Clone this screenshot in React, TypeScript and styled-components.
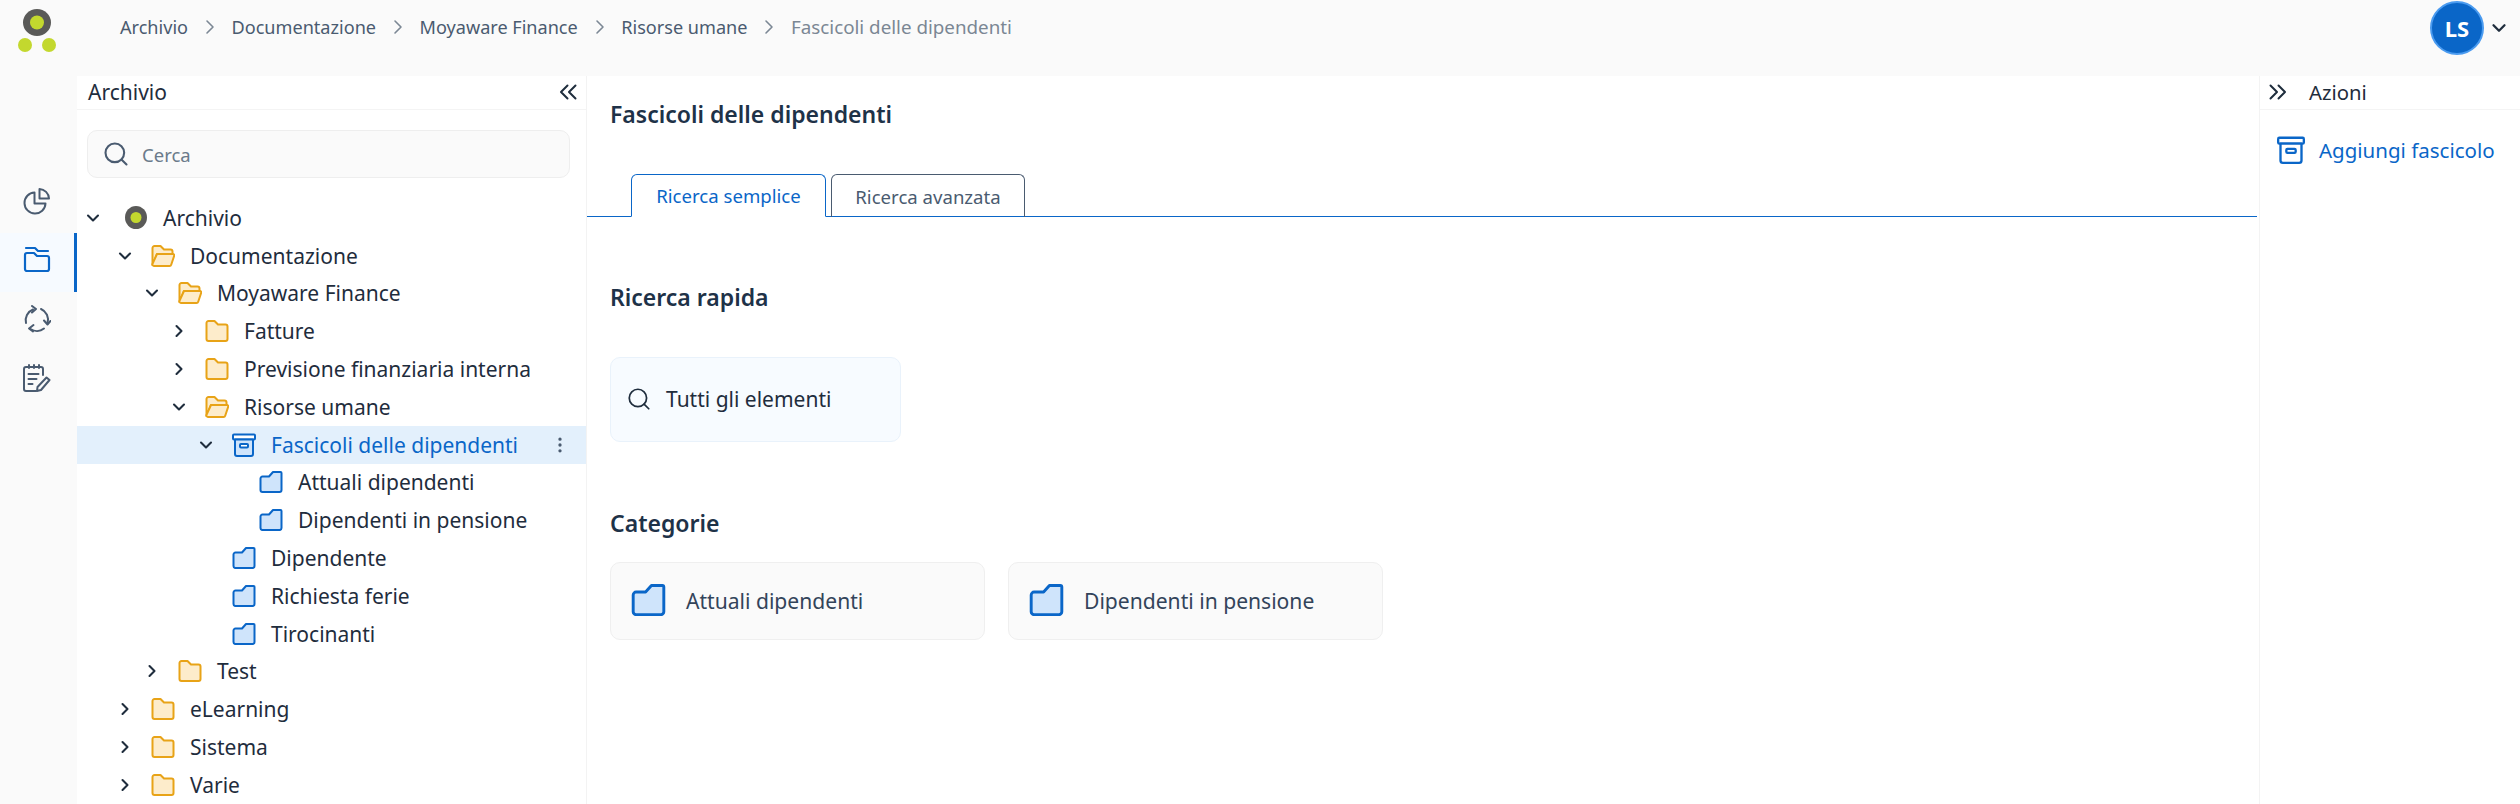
import React from 'react'
import styled, { createGlobalStyle } from 'styled-components'
import { ChevronDown, ChevronRight, MoreVertical, Search } from 'lucide-react'

const GlobalStyle = createGlobalStyle`
  html, body {
    margin: 0;
    padding: 0;
    background: #fafafa;
    font-family: "Noto Sans", "Liberation Sans", sans-serif;
    color: #1f2d3d;
  }
  * { box-sizing: border-box; }
`

const BLUE = '#0a66c8'

const Page = styled.div`
  width: 2520px;
  height: 804px;
  display: flex;
  flex-direction: column;
  overflow: hidden;
`

const TopBar = styled.header`
  height: 76px;
  display: flex;
  align-items: flex-start;
  background: #fafafa;
`

const LogoBox = styled.div`
  width: 120px;
  padding: 9px 0 0 18px;
  line-height: 0;
`

const Crumbs = styled.nav`
  display: flex;
  align-items: center;
  height: 54px;
  flex: 1;
`

const Crumb = styled.span<{ $current?: boolean }>`
  font-size: ${(p) => (p.$current ? 18.8 : 18.1)}px;
  color: ${(p) => (p.$current ? '#7b8794' : '#4a5b70')};
`

const CrumbSep = styled.span`
  display: flex;
  width: 43.5px;
  justify-content: center;
  color: #7b8794;
`

const UserBox = styled.div`
  display: flex;
  align-items: center;
  height: 56px;
  padding-right: 10px;
  gap: 4px;
`

const Avatar = styled.div`
  width: 54px;
  height: 54px;
  border-radius: 50%;
  background: ${BLUE};
  border: 2px solid #4a9bf0;
  color: #fff;
  font-size: 22px;
  font-weight: 700;
  display: flex;
  align-items: center;
  justify-content: center;
`

const Body = styled.div`
  flex: 1;
  display: flex;
  min-height: 0;
`

const Rail = styled.aside`
  width: 77px;
  padding-top: 98px;
  display: flex;
  flex-direction: column;
  flex-shrink: 0;
`

const RailItem = styled.div<{ $active?: boolean }>`
  height: 59px;
  display: flex;
  align-items: center;
  justify-content: center;
  padding-bottom: 5px;
  color: ${(p) => (p.$active ? BLUE : '#4a5b70')};
  background: ${(p) => (p.$active ? '#f6faff' : 'transparent')};
  border-right: 3px solid ${(p) => (p.$active ? BLUE : 'transparent')};
`

const TreePanel = styled.section`
  width: 510px;
  flex-shrink: 0;
  background: #fff;
  border-right: 1px solid #f3f3f3;
  overflow: hidden;
`

const PanelHead = styled.div`
  height: 34px;
  display: flex;
  align-items: center;
  justify-content: space-between;
  padding: 0 5px 2px 11px;
  border-bottom: 1px solid #f4f4f4;
  font-size: 21px;
`

const SearchBox = styled.div`
  margin: 20px 16px 21px 10px;
  height: 48px;
  display: flex;
  align-items: center;
  gap: 12px;
  padding-left: 14px;
  background: #fafafa;
  border: 1px solid #eeeeee;
  border-radius: 10px;
  font-size: 18.5px;
  color: #6b7a8a;
  svg { color: #4a5b70; }
`

const Row = styled.div<{ $level: number; $active?: boolean }>`
  height: 37.8px;
  display: flex;
  align-items: center;
  position: relative;
  padding-left: ${(p) => 6 + p.$level * 27}px;
  background: ${(p) => (p.$active ? '#e3f0fc' : 'transparent')};
  color: ${(p) => (p.$active ? BLUE : '#1f2d3d')};
  font-size: 21px;
`

const Twist = styled.span<{ $root: boolean }>`
  width: 20px;
  margin-left: ${(p) => (p.$root ? 0 : 5)}px;
  margin-right: ${(p) => (p.$root ? 21 : 16)}px;
  display: flex;
  justify-content: center;
  color: #1f2d3d;
`

const NodeIcon = styled.span`
  width: 24px;
  margin-right: 15px;
  display: flex;
  justify-content: center;
`

const RowMenu = styled.span`
  position: absolute;
  right: 16px;
  top: 9px;
  display: flex;
  color: #4a5b70;
`

const Main = styled.main`
  flex: 1;
  min-width: 0;
  background: #fff;
`

const Title = styled.h1`
  margin: 0;
  height: 98px;
  padding: 23px 0 0 23px;
  font-size: 23px;
  line-height: 30px;
  font-weight: 600;
  color: #1e3248;
`

const Tabs = styled.div`
  display: flex;
  gap: 5px;
  height: 43px;
  margin-right: 2px;
  padding-left: 44px;
  border-bottom: 1px solid ${BLUE};
`

const Tab = styled.div<{ $active?: boolean }>`
  height: 43px;
  width: ${(p) => (p.$active ? 195 : 194)}px;
  display: flex;
  align-items: center;
  justify-content: center;
  border: 1px solid ${(p) => (p.$active ? BLUE : '#4a5b70')};
  border-bottom: ${(p) => (p.$active ? '1px solid #fff' : 'none')};
  border-radius: 6px 6px 0 0;
  font-size: 18.6px;
  color: ${(p) => (p.$active ? BLUE : '#4a5b70')};
`

const Section = styled.section<{ $top: number }>`
  padding: ${(p) => p.$top}px 0 0 23px;
`

const SectionTitle = styled.h2`
  margin: 0 0 45px;
  font-size: 23px;
  line-height: 30px;
  font-weight: 600;
  color: #1e3248;
`

const CategoryTitle = styled(SectionTitle)`
  margin-bottom: 24px;
`

const QuickCard = styled.div`
  width: 291px;
  height: 85px;
  display: flex;
  align-items: center;
  gap: 14px;
  padding: 0 0 2px 15px;
  background: #f7fbff;
  border: 1px solid #e9f2fb;
  border-radius: 10px;
  font-size: 21px;
  svg { color: #1f2d3d; }
`

const CardRow = styled.div`
  display: flex;
  gap: 23px;
`

const CategoryCard = styled.div`
  width: 375px;
  height: 78px;
  display: flex;
  align-items: center;
  gap: 20px;
  padding: 0 0 2px 20px;
  background: #fafafa;
  border: 1px solid #efefef;
  border-radius: 10px;
  font-size: 21.1px;
  color: #33445a;
`

const ActionPanel = styled.aside`
  width: 261px;
  flex-shrink: 0;
  background: #fff;
  border-left: 1px solid #f3f3f3;
`

const ActionHead = styled(PanelHead)`
  justify-content: flex-start;
  gap: 20px;
  padding-left: 5px;
  font-size: 20.3px;
`

const ActionLink = styled.div`
  display: flex;
  align-items: center;
  gap: 14px;
  padding: 26px 0 0 17px;
  font-size: 20.5px;
  color: ${BLUE};
`

const Logo = () => (
  <svg width="38" height="43" viewBox="0 0 38 43">
    <ellipse cx="19" cy="13.5" rx="14" ry="13.5" fill="#5a5a58" />
    <circle cx="19" cy="13.5" r="7" fill="#c3d82e" />
    <circle cx="7" cy="36" r="7" fill="#c3d82e" />
    <circle cx="31" cy="36" r="7" fill="#c3d82e" />
  </svg>
)

const MiniLogo = () => (
  <svg width="22" height="23" viewBox="0 0 22 23">
    <ellipse cx="11" cy="11.5" rx="11" ry="11.5" fill="#5a5a58" />
    <circle cx="11" cy="11.5" r="5.5" fill="#c3d82e" />
  </svg>
)

const FolderClosed = () => (
  <svg width="24" height="22" viewBox="0 0 24 22" fill="#fdeccb" stroke="#e8a317" strokeWidth="2" strokeLinejoin="round">
    <path d="M1.5 3a2 2 0 0 1 2-2h6l3.5 3.5h7.5a2 2 0 0 1 2 2V19a2 2 0 0 1-2 2h-17a2 2 0 0 1-2-2z" />
  </svg>
)

const FolderOpen = () => (
  <svg width="24" height="22" viewBox="0 0 24 22" fill="#fdeccb" stroke="#e8a317" strokeWidth="2" strokeLinejoin="round">
    <path d="M1.5 3a2 2 0 0 1 2-2h6l3.5 3.5h6.5a2 2 0 0 1 2 2V9H6L1.5 20z" />
    <path d="M6 9h16a1.3 1.3 0 0 1 1.2 1.7l-3 9a1.8 1.8 0 0 1-1.7 1.3H3a1.6 1.6 0 0 1-1.5-2.2z" />
  </svg>
)

const FolderBlue = ({ size = 24 }: { size?: number }) => (
  <svg width={size} height={size * 0.92} viewBox="0 0 24 22" fill="#cfe4fb" stroke={BLUE} strokeWidth="2" strokeLinejoin="round">
    <path d="M1.5 7.5a2 2 0 0 1 2-2H10L14 1h7.5a1 1 0 0 1 1 1V19a2 2 0 0 1-2 2h-17a2 2 0 0 1-2-2z" />
  </svg>
)

const ArchiveBox = ({ fill = '#cfe4fb', w = 24 }: { fill?: string; w?: number }) => (
  <svg width={w} height={w} viewBox="0 0 24 24" fill="none" stroke={BLUE} strokeWidth="2" strokeLinejoin="round">
    <rect x="1" y="1.5" width="22" height="5" rx="1" fill="#fff" />
    <path d="M3 6.5h18V21a2 2 0 0 1-2 2H5a2 2 0 0 1-2-2z" fill={fill} />
    <rect x="8" y="11" width="8" height="3.5" rx="1" fill="#fff" />
  </svg>
)

const DoubleChevron = ({ flip }: { flip?: boolean }) => (
  <svg width="24" height="24" viewBox="0 0 24 24" fill="none" stroke="#1f2d3d" strokeWidth="2" strokeLinecap="round" strokeLinejoin="round">
    <path d={flip ? 'M5.5 5.5L12 12l-6.5 6.5M13.5 5.5L20 12l-6.5 6.5' : 'M10.5 5.5L4 12l6.5 6.5M18.5 5.5L12 12l6.5 6.5'} />
  </svg>
)

const PieIcon = () => (
  <svg width="28" height="28" viewBox="0 0 28 28" fill="none" stroke="currentColor" strokeWidth="2" strokeLinejoin="round" strokeLinecap="round">
    <path d="M11.5 5.5a10.5 10.5 0 1 0 11 11H11.5z" />
    <path d="M16.5 2a10 10 0 0 1 9.5 9.5h-9.5z" />
  </svg>
)

const FoldersIcon = () => (
  <svg width="28" height="28" viewBox="0 0 28 28" fill="none" stroke="currentColor" strokeWidth="2.2" strokeLinejoin="round" strokeLinecap="round">
    <path d="M3 2h9l3 3h10" />
    <path d="M2 9a2 2 0 0 1 2-2h7l3 3h10a2 2 0 0 1 2 2v11a2 2 0 0 1-2 2H4a2 2 0 0 1-2-2z" />
  </svg>
)

const CycleIcon = () => (
  <svg width="28" height="28" viewBox="0 0 28 28" fill="none" stroke="currentColor" strokeWidth="2" strokeLinejoin="round" strokeLinecap="round">
    <path d="M3 18a11.5 11.5 0 0 1 7-13.5" />
    <path d="M9 1l4 3-4 3.5" />
    <path d="M18 4a11.5 11.5 0 0 1 6.5 14" />
    <path d="M21 15.5l3.5 4 3-3.500" />
    <path d="M21 23.5a11.5 11.5 0 0 1-13.5.5" />
    <path d="M10.5 20l-4.500 3.500 4 3" />
  </svg>
)

const NotesIcon = () => (
  <svg width="30" height="28" viewBox="0 0 30 28" fill="none" stroke="currentColor" strokeWidth="2" strokeLinejoin="round" strokeLinecap="round">
    <path d="M21 11V5a2 2 0 0 0-2-2H4a2 2 0 0 0-2 2v20a2 2 0 0 0 2 2h10" />
    <path d="M7 1v3M12 1v3M17 1v3" />
    <path d="M6.5 10h10M6.5 15h8M6.5 20h4" />
    <path d="M24.5 13.5l3 2.5-8.5 10-4 1 .5-4z" />
  </svg>
)

type TreeNode = {
  label: string
  level: number
  twist?: 'open' | 'closed'
  icon: 'logo' | 'closed' | 'open' | 'blue' | 'box'
  active?: boolean
}

const tree: TreeNode[] = [
  { label: 'Archivio', level: 0, twist: 'open', icon: 'logo' },
  { label: 'Documentazione', level: 1, twist: 'open', icon: 'open' },
  { label: 'Moyaware Finance', level: 2, twist: 'open', icon: 'open' },
  { label: 'Fatture', level: 3, twist: 'closed', icon: 'closed' },
  { label: 'Previsione finanziaria interna', level: 3, twist: 'closed', icon: 'closed' },
  { label: 'Risorse umane', level: 3, twist: 'open', icon: 'open' },
  { label: 'Fascicoli delle dipendenti', level: 4, twist: 'open', icon: 'box', active: true },
  { label: 'Attuali dipendenti', level: 5, icon: 'blue' },
  { label: 'Dipendenti in pensione', level: 5, icon: 'blue' },
  { label: 'Dipendente', level: 4, icon: 'blue' },
  { label: 'Richiesta ferie', level: 4, icon: 'blue' },
  { label: 'Tirocinanti', level: 4, icon: 'blue' },
  { label: 'Test', level: 2, twist: 'closed', icon: 'closed' },
  { label: 'eLearning', level: 1, twist: 'closed', icon: 'closed' },
  { label: 'Sistema', level: 1, twist: 'closed', icon: 'closed' },
  { label: 'Varie', level: 1, twist: 'closed', icon: 'closed' },
]

const nodeIcons = {
  logo: <MiniLogo />,
  closed: <FolderClosed />,
  open: <FolderOpen />,
  blue: <FolderBlue />,
  box: <ArchiveBox />,
}

const crumbs = ['Archivio', 'Documentazione', 'Moyaware Finance', 'Risorse umane']

const App = () => (
  <Page>
    <GlobalStyle />
    <TopBar>
      <LogoBox>
        <Logo />
      </LogoBox>
      <Crumbs>
        {crumbs.map((c) => (
          <React.Fragment key={c}>
            <Crumb>{c}</Crumb>
            <CrumbSep>
              <ChevronRight size={24} strokeWidth={1.6} />
            </CrumbSep>
          </React.Fragment>
        ))}
        <Crumb $current>Fascicoli delle dipendenti</Crumb>
      </Crumbs>
      <UserBox>
        <Avatar>LS</Avatar>
        <ChevronDown size={22} color="#1f2d3d" strokeWidth={2.5} />
      </UserBox>
    </TopBar>
    <Body>
      <Rail>
        <RailItem>
          <PieIcon />
        </RailItem>
        <RailItem $active>
          <FoldersIcon />
        </RailItem>
        <RailItem>
          <CycleIcon />
        </RailItem>
        <RailItem>
          <NotesIcon />
        </RailItem>
      </Rail>
      <TreePanel>
        <PanelHead>
          Archivio
          <DoubleChevron />
        </PanelHead>
        <SearchBox>
          <Search size={28} strokeWidth={1.8} />
          Cerca
        </SearchBox>
        {tree.map((n) => (
          <Row key={n.label} $level={n.level} $active={n.active}>
            <Twist $root={n.level === 0}>
              {n.twist === 'open' && <ChevronDown size={20} strokeWidth={2.5} />}
              {n.twist === 'closed' && <ChevronRight size={20} strokeWidth={2.5} />}
            </Twist>
            <NodeIcon>{nodeIcons[n.icon]}</NodeIcon>
            {n.label}
            {n.active && (
              <RowMenu>
                <MoreVertical size={20} />
              </RowMenu>
            )}
          </Row>
        ))}
      </TreePanel>
      <Main>
        <Title>Fascicoli delle dipendenti</Title>
        <Tabs>
          <Tab $active>Ricerca semplice</Tab>
          <Tab>Ricerca avanzata</Tab>
        </Tabs>
        <Section $top={65}>
          <SectionTitle>Ricerca rapida</SectionTitle>
          <QuickCard>
            <Search size={26} strokeWidth={1.6} />
            Tutti gli elementi
          </QuickCard>
        </Section>
        <Section $top={66}>
          <CategoryTitle>Categorie</CategoryTitle>
          <CardRow>
            <CategoryCard>
              <FolderBlue size={35} />
              Attuali dipendenti
            </CategoryCard>
            <CategoryCard>
              <FolderBlue size={35} />
              Dipendenti in pensione
            </CategoryCard>
          </CardRow>
        </Section>
      </Main>
      <ActionPanel>
        <ActionHead>
          <DoubleChevron flip />
          Azioni
        </ActionHead>
        <ActionLink>
          <ArchiveBox fill="#fff" w={28} />
          Aggiungi fascicolo
        </ActionLink>
      </ActionPanel>
    </Body>
  </Page>
)

export default App
